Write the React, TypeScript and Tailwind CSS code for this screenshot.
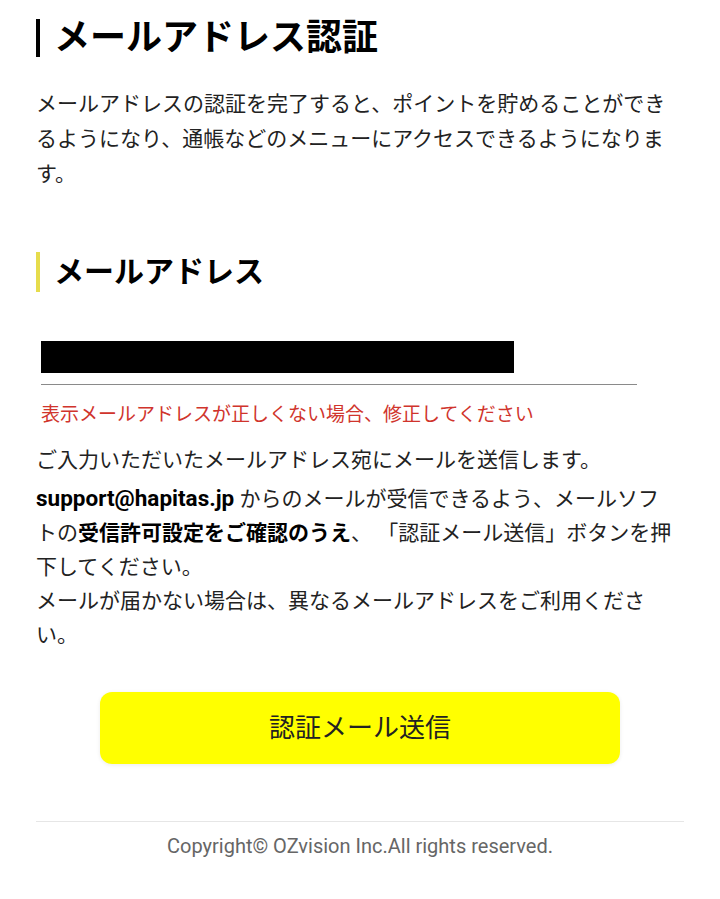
export default function App() {
  const font = { fontFamily: 'Roboto, "Noto Sans CJK JP", sans-serif' };
  return (
    <div className="min-h-[899px] w-[720px] bg-white text-[#1a1a1a]" style={font}>
      <div className="px-[36px] pt-[17px]">
        <h1 className="flex items-center gap-[14px] text-[36px] font-bold leading-[42px] text-black">
          <span className="block h-[38px] w-[4px] bg-black" />
          メールアドレス認証
        </h1>
        <p className="mt-[28px] text-[21px] leading-[35px] text-[#222]">
          メールアドレスの認証を完了すると、ポイントを貯めることができるようになり、通帳などのメニューにアクセスできるようになります。
        </p>

        <h2 className="mt-[60px] flex items-center gap-[14px] text-[30px] font-bold leading-[40px] text-black">
          <span className="block h-[40px] w-[4px] bg-[#e6dc4c]" />
          メールアドレス
        </h2>

        <div className="ml-[5px] mt-[49px] w-[596px] border-b border-[#8a8a8a] pb-[11px]">
          <div className="h-[32px] w-[473px] bg-black" />
        </div>
        <p className="ml-[5px] mt-[16px] text-[19px] leading-[28px] text-[#d0342c]">
          表示メールアドレスが正しくない場合、修正してください
        </p>

        <p className="mt-[14px] text-[21px] leading-[34px] text-[#222]">
          ご入力いただいたメールアドレス宛にメールを送信します。
        </p>
        <p className="mt-[4px] pr-[8px] text-[21px] leading-[34px] text-[#222]">
          <b className="text-[22.5px] font-bold text-black">support@hapitas.jp</b> からのメールが受信できるよう、メールソフトの
          <b className="font-bold text-black">受信許可設定をご確認のうえ</b>、 「認証メール送信」ボタンを押下してください。
          <br />
          メールが届かない場合は、異なるメールアドレスをご利用ください。
        </p>

        <div className="mt-[40px] flex justify-center">
          <button className="h-[72px] w-[520px] rounded-[12px] bg-[#ffff00] text-[26px] text-[#222] shadow-[0_1px_4px_rgba(0,0,0,0.08)]">
            認証メール送信
          </button>
        </div>

        <div className="mt-[57px] border-t border-[#e6e6e6] pt-[10px] pb-[30px] text-center text-[20px] leading-[28px] text-[#666]">
          Copyright© OZvision Inc.All rights reserved.
        </div>
      </div>
    </div>
  );
}
